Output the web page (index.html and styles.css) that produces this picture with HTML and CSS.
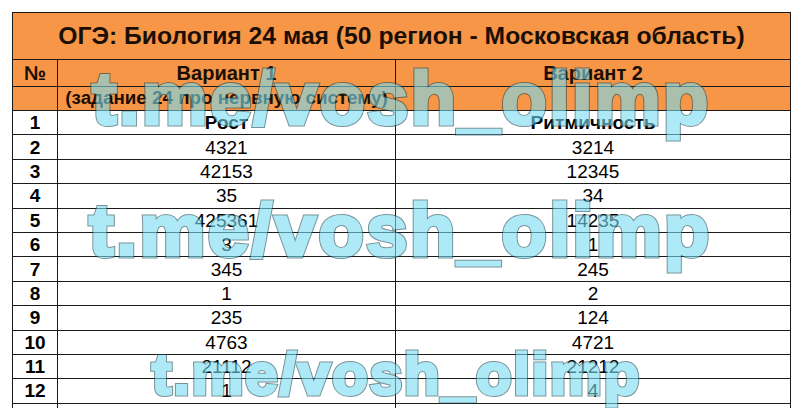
FILE: index.html
```html
<!DOCTYPE html>
<html lang="ru">
<head>
<meta charset="utf-8">
<title>ОГЭ: Биология 24 мая</title>
<link rel="stylesheet" href="styles.css">
</head>
<body>
<div class="page">
  <table class="answers">
    <colgroup>
      <col class="c-num">
      <col class="c-v1">
      <col class="c-v2">
    </colgroup>
    <thead>
      <tr class="r-title"><th colspan="3">ОГЭ: Биология 24 мая (50 регион - Московская область)</th></tr>
      <tr class="r-head"><th>№</th><th>Вариант 1</th><th>Вариант 2</th></tr>
      <tr class="r-sub"><th></th><th class="sub">(задание 24 про нервную систему)</th><th></th></tr>
    </thead>
    <tbody>
      <tr class="r-first"><td class="n">1</td><td class="b">Рост</td><td class="b">Ритмичность</td></tr>
      <tr><td class="n">2</td><td>4321</td><td>3214</td></tr>
      <tr><td class="n">3</td><td>42153</td><td>12345</td></tr>
      <tr><td class="n">4</td><td>35</td><td>34</td></tr>
      <tr><td class="n">5</td><td>425361</td><td>14235</td></tr>
      <tr><td class="n">6</td><td>3</td><td>1</td></tr>
      <tr><td class="n">7</td><td>345</td><td>245</td></tr>
      <tr><td class="n">8</td><td>1</td><td>2</td></tr>
      <tr><td class="n">9</td><td>235</td><td>124</td></tr>
      <tr><td class="n">10</td><td>4763</td><td>4721</td></tr>
      <tr><td class="n">11</td><td>21112</td><td>21212</td></tr>
      <tr><td class="n">12</td><td>1</td><td>4</td></tr>
      <tr><td class="n">13</td><td>13241</td><td>1324</td></tr>
    </tbody>
  </table>
  <div class="wm wm1"><span class="wm-edge">t.me/vosh_olimp</span><span class="wm-body">t.me/vosh_olimp</span></div>
  <div class="wm wm2"><span class="wm-edge">t.me/vosh_olimp</span><span class="wm-body">t.me/vosh_olimp</span></div>
  <div class="wm wm3"><span class="wm-edge">t.me/vosh_olimp</span><span class="wm-body">t.me/vosh_olimp</span></div>
</div>
</body>
</html>
```
FILE: styles.css
```css
html, body {
  margin: 0;
  padding: 0;
  background: #ffffff;
  overflow: hidden;
}
.page {
  position: relative;
  width: 800px;
  height: 408px;
  overflow: hidden;
  padding: 12px 0 0 12px;
  box-sizing: border-box;
  font-family: "Liberation Sans", Arial, sans-serif;
  color: #000;
}
.answers {
  border-collapse: collapse;
  table-layout: fixed;
  width: 778px;
}
.c-num { width: 45px; }
.c-v1 { width: 338px; }
.c-v2 { width: 395px; }
.answers th,
.answers td {
  border: 1px solid #1a1a1a;
  padding: 0;
  text-align: center;
  vertical-align: middle;
  white-space: nowrap;
  overflow: visible;
  line-height: 1;
}
.answers thead th {
  background: #f79646;
  font-weight: bold;
}
.r-title th {
  height: 46px;
  font-size: 24.7px;
  color: #1b0f05;
}
.r-head th {
  height: 26px;
  font-size: 20px;
  color: #1b0f05;
}
.r-sub th {
  height: 23px;
  font-size: 18.8px;
  color: #1b0f05;
}
.r-first td { height: 24px; }
.answers tbody td {
  height: 23.4px;
  font-size: 19px;
}
.answers td.n,
.answers td.b {
  font-weight: bold;
}
.wm {
  position: absolute;
  font-family: "Liberation Sans", Arial, sans-serif;
  font-weight: bold;
  line-height: 1;
  white-space: nowrap;
  opacity: 0.6;
  pointer-events: none;
}
.wm-edge,
.wm-body {
  display: block;
}
.wm-edge {
  color: #1f4a55;
  -webkit-text-stroke: 5px #1f4a55;
}
.wm-body {
  position: absolute;
  left: 0;
  top: 0;
  color: #78dcf2;
  -webkit-text-stroke: 3px #78dcf2;
}
.wm1 { left: 92px; top: 62px; font-size: 74px; letter-spacing: 2.3px; }
.wm2 { left: 89px; top: 194px; font-size: 74px; letter-spacing: 2.6px; }
.wm3 { left: 152px; top: 345px; font-size: 58px; letter-spacing: 2.1px; }
```
